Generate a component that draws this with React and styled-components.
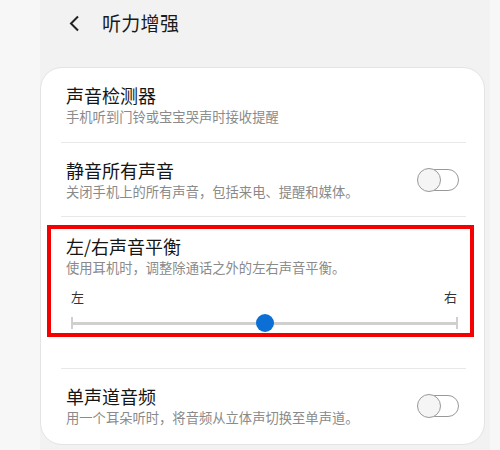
import React from 'react';
import styled, { createGlobalStyle } from 'styled-components';

const GlobalStyle = createGlobalStyle`
  html, body {
    margin: 0;
    padding: 0;
    background: #f2f2f2;
  }
  body {
    font-family: "Noto Sans CJK SC", "Noto Sans", sans-serif;
  }
`;

const Page = styled.div`
  display: flex;
  width: 500px;
  height: 450px;
  overflow: hidden;
`;

const SideStrip = styled.div`
  width: ${({ w }) => w}px;
  flex: none;
  background: #f7f7f7;
`;

const Main = styled.div`
  flex: 1;
  background: #f2f2f2;
  padding-right: 5px;
`;

const Header = styled.div`
  height: 67px;
  display: flex;
  align-items: flex-start;
  padding-top: 9px;
  box-sizing: border-box;
`;

const BackButton = styled.div`
  width: 62px;
  height: 28px;
  display: flex;
  align-items: center;
  padding-left: 28px;
  box-sizing: border-box;
`;

const Title = styled.div`
  font-size: 19px;
  line-height: 28px;
  color: #1a1a1a;
  letter-spacing: 0.3px;
`;

const Card = styled.div`
  background: #fff;
  border: 1px solid #e4e4e4;
  border-radius: 22px;
  height: 378px;
  box-sizing: border-box;
  overflow: hidden;
`;

const Row = styled.div`
  display: flex;
  align-items: center;
  padding: ${({ top }) => top}px 25px ${({ bottom }) => bottom}px 25px;
`;

const RowText = styled.div`
  flex: 1;
`;

const RowTitle = styled.div`
  font-size: 18px;
  line-height: 22px;
  color: #151515;
`;

const RowSub = styled.div`
  font-size: 13.3px;
  line-height: 18px;
  color: #8a8a8a;
  margin-top: 2px;
`;

const Divider = styled.div`
  height: 1px;
  background: #e8e8e8;
  margin: 0 18px 0 20px;
`;

const Toggle = styled.div`
  position: relative;
  width: 41px;
  height: 22px;
  flex: none;
  border: 1.3px solid #999;
  border-radius: 12px;
  box-sizing: border-box;
  background: #fff;
`;

const Knob = styled.div`
  position: absolute;
  left: -2px;
  top: -2.5px;
  width: 24px;
  height: 24px;
  border: 1.3px solid #999;
  border-radius: 50%;
  box-sizing: border-box;
  background: #f5f5f5;
`;

const Highlight = styled.div`
  margin: 8px 10px 31px 6px;
  border: 4px solid #f40000;
  padding: 6px 12px 0 15px;
  height: 112px;
  box-sizing: border-box;
`;

const Ends = styled.div`
  display: flex;
  justify-content: space-between;
  padding: 0 1px 0 5px;
  margin-top: 11px;
  font-size: 13px;
  line-height: 18px;
  color: #333;
`;

const Slider = styled.div`
  position: relative;
  height: 20px;
  margin: 7px 0 0 5px;
`;

const Track = styled.div`
  position: absolute;
  left: 0;
  right: 0;
  top: 9px;
  height: 3px;
  background: #cfcfcf;
`;

const Tick = styled.div`
  position: absolute;
  top: 4px;
  width: 2px;
  height: 12px;
  background: #cfcfcf;
  ${({ side }) => side}: 0;
`;

const Thumb = styled.div`
  position: absolute;
  top: 1px;
  width: 18px;
  height: 18px;
  margin-left: -9px;
  border-radius: 50%;
  background: #0b6fd6;
`;

const ToggleSwitch = () => (
  <Toggle>
    <Knob />
  </Toggle>
);

export default function App() {
  const balance = 0.5;
  return (
    <>
      <GlobalStyle />
      <Page>
        <SideStrip w={40} />
        <Main>
          <Header>
            <BackButton>
              <svg width="12" height="17" viewBox="0 0 12 17">
                <path d="M10 1.5 L3 8.5 L10 15.5" fill="none" stroke="#222" strokeWidth="2" />
              </svg>
            </BackButton>
            <Title>听力增强</Title>
          </Header>
          <Card>
            <Row top={16} bottom={16}>
              <RowText>
                <RowTitle>声音检测器</RowTitle>
                <RowSub>手机听到门铃或宝宝哭声时接收提醒</RowSub>
              </RowText>
            </Row>
            <Divider />
            <Row top={16} bottom={15}>
              <RowText>
                <RowTitle>静音所有声音</RowTitle>
                <RowSub>关闭手机上的所有声音，包括来电、提醒和媒体。</RowSub>
              </RowText>
              <ToggleSwitch />
            </Row>
            <Divider />
            <Highlight>
              <RowTitle>左/右声音平衡</RowTitle>
              <RowSub>使用耳机时，调整除通话之外的左右声音平衡。</RowSub>
              <Ends>
                <span>左</span>
                <span>右</span>
              </Ends>
              <Slider>
                <Track />
                <Tick side="left" />
                <Tick side="right" />
                <Thumb style={{ left: `${balance * 100}%` }} />
              </Slider>
            </Highlight>
            <Divider />
            <Row top={16} bottom={16}>
              <RowText>
                <RowTitle>单声道音频</RowTitle>
                <RowSub>用一个耳朵听时，将音频从立体声切换至单声道。</RowSub>
              </RowText>
              <ToggleSwitch />
            </Row>
          </Card>
        </Main>
        <SideStrip w={10} />
      </Page>
    </>
  );
}
